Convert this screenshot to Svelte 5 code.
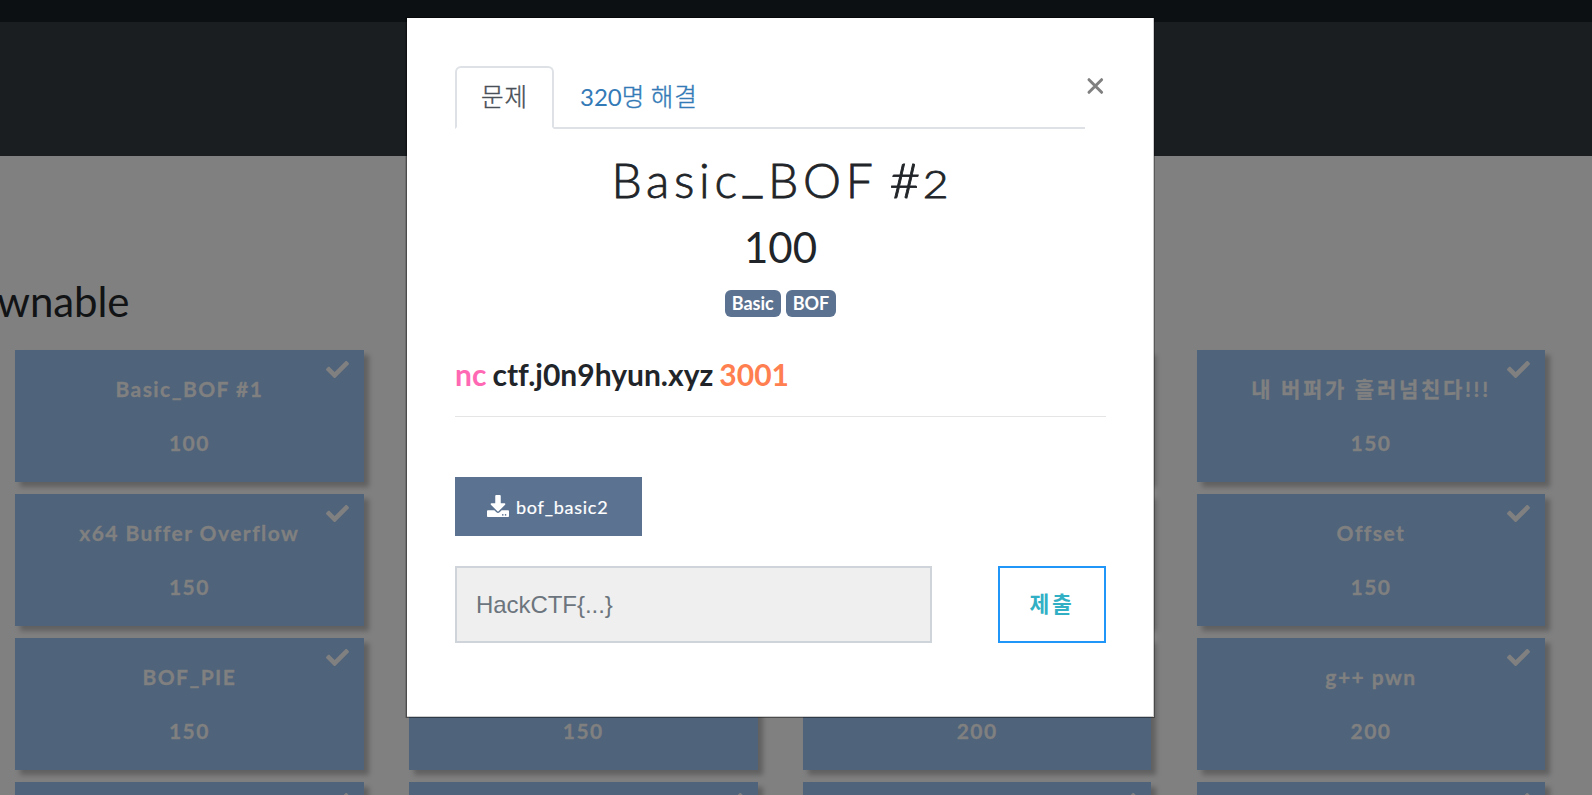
<script>
  const rows = [
    [['Basic_BOF #1', 100], ['', 100], ['', 100], ['내 버퍼가 흘러넘친다!!!', 150]],
    [['x64 Buffer Overflow', 150], ['', 150], ['', 150], ['Offset', 150]],
    [['BOF_PIE', 150], ['', 150], ['', 200], ['g++ pwn', 200]],
    [['', ''], ['', ''], ['', ''], ['', '']]
  ];
</script>

<div class="page">
  <div class="navbar"></div>
  <div class="jumbotron"></div>
  <main>
    <h3 class="category">Pwnable</h3>
    <div class="grid">
      {#each rows as row}
        {#each row as [name, value]}
          <div class="card">
            <svg class="check" viewBox="0 0 512 512" fill="currentColor"><path d="M173.898 439.404l-166.4-166.4c-9.997-9.997-9.997-26.206 0-36.204l36.203-36.204c9.997-9.998 26.207-9.998 36.204 0L192 312.69 432.095 72.596c9.997-9.997 26.207-9.997 36.204 0l36.203 36.204c9.997 9.997 9.997 26.206 0 36.204l-294.4 294.401c-9.998 9.997-26.207 9.997-36.204-.001z" /></svg>
            <p class:ko={name.startsWith('내')}>{name}</p>
            <span>{value}</span>
          </div>
        {/each}
      {/each}
    </div>
  </main>
</div>

<div class="overlay">
  <div class="modal">
    <div class="head">
      <div class="tabs">
        <div class="tab active"><span class="hangul">문제</span></div>
        <div class="tab">320<span class="hangul">명 해결</span></div>
      </div>
      <svg class="close" viewBox="0 0 18 18"><path d="M3 2.700L15.600 15.300M15.600 2.700L3 15.300" /></svg>
    </div>
    <h2>Basic<i>_</i>BOF <em>#</em><b>2</b></h2>
    <h3 class="value">100</h3>
    <div class="tags"><span>Basic</span><span>BOF</span></div>
    <div class="desc"><span class="nc">nc</span> ctf.j0n9hyun.xyz <span class="port">3001</span></div>
    <div class="file">
      <svg viewBox="0 0 512 512" fill="currentColor"><path d="M216 0h80c13.300 0 24 10.700 24 24v168h87.700c17.800 0 26.700 21.500 14.100 34.100L269.700 378.300c-7.500 7.500-19.800 7.500-27.300 0L90.100 226.100c-12.600-12.600-3.700-34.100 14.100-34.100H192V24c0-13.300 10.700-24 24-24zm296 376v112c0 13.300-10.700 24-24 24H24c-13.300 0-24-10.700-24-24V376c0-13.300 10.700-24 24-24h146.700l49 49c20.100 20.100 52.500 20.100 72.600 0l49-49H488c13.300 0 24 10.700 24 24zm-124 88c0-11-9-20-20-20s-20 9-20 20 9 20 20 20 20-9 20-20zm64 0c0-11-9-20-20-20s-20 9-20 20 9 20 20 20 20-9 20-20z" /></svg>
      <span>bof_basic2</span>
    </div>
    <div class="form">
      <input placeholder={'HackCTF{...}'} />
      <button>제출</button>
    </div>
  </div>
</div>

<style>
  :global(body) { margin: 0; overflow: hidden; background: #808080; }
  .page, .overlay, .page *, .overlay * { box-sizing: border-box; }
  .page, .overlay { font-family: Lato, 'Noto Sans CJK KR', sans-serif; font-variant-ligatures: none; }
  .page { height: 795px; overflow: hidden; background: #808080; }
  .navbar { height: 22px; background: #0c1013; }
  .jumbotron { height: 134px; background: #1a1e21; }
  .category { margin: 120px 0 0 -28px; height: 74px; font-size: 42px; line-height: 50px; font-weight: 400; letter-spacing: -0.1px; color: #111315; }
  .grid { display: grid; grid-template-columns: repeat(4, 348.7px); column-gap: 45.2px; row-gap: 12px; padding-left: 15px; }
  .card { position: relative; height: 132px; padding-top: 23px; background: #4f637a; box-shadow: 5px 5px 5px rgba(0, 0, 0, 0.25); color: #808080; text-align: center; font-size: 21px; line-height: 32px; font-weight: 700; letter-spacing: 1.45px; -webkit-text-stroke: 0.35px #808080; }
  .card p { margin: 0 0 22px; height: 32px; }
  .card p.ko { letter-spacing: 2.7px; }
  .card span { display: block; }
  .check { position: absolute; top: 8px; right: 15px; width: 23px; height: 23px; }

  .overlay { position: absolute; inset: 0; display: flex; justify-content: flex-start; align-items: flex-start; padding: 18px 0 0 407px; }
  .modal { width: 747px; height: 699px; padding: 48px 47px 0 48px; background: #fff; border: solid #ccc; border-width: 0 1px 1px 0; box-shadow: 0 0 0 1px rgba(0, 0, 0, 0.3), -1px 0 0 1px rgba(0, 0, 0, 0.15); color: #212529; }
  .head { display: flex; height: 63px; }
  .tabs { display: flex; width: 630px; height: 63px; border-bottom: 2px solid #dee2e6; }
  .tab { height: 63px; padding: 11px 24px 0; border: 2px solid transparent; border-radius: 6px 6px 0 0; font-size: 24px; line-height: 36px; font-weight: 400; color: #337ab7; white-space: nowrap; }
  .tab.active { width: 99px; padding-right: 0; border-color: #dee2e6 #dee2e6 #fff; background: #fff; color: #495057; }
  .hangul { position: relative; top: -0.5px; font-size: 24.5px; font-weight: 300; letter-spacing: 0.9px; word-spacing: -2px; -webkit-text-stroke: 0.4px currentColor; }
  .close { width: 18px; height: 18px; margin: 11px 0 0 1px; fill: none; stroke: #808080; stroke-width: 3; stroke-linecap: round; }
  h2 { margin: 22px 0 0; height: 58px; padding-right: 3px; text-align: center; font-size: 48px; line-height: 58px; font-weight: 300; letter-spacing: 4.7px; word-spacing: -3px; white-space: nowrap; -webkit-text-stroke: 0.8px #212529; }
  h2 i { position: relative; top: -6px; font-style: normal; -webkit-text-stroke: 1.4px #212529; }
  h2 em { display: inline-block; font-style: normal; letter-spacing: 0; margin-right: 6px; transform: scaleX(1.12); }
  h2 b { display: inline-block; font-weight: 300; font-size: 37px; letter-spacing: 0; transform: scaleX(1.2); }
  .value { margin: 13px 0 0; height: 50px; text-align: center; font-size: 42px; line-height: 50px; font-weight: 400; }
  .tags { display: flex; justify-content: center; gap: 5px; margin-top: 18px; }
  .tags span { height: 27px; padding: 0 7px; border-radius: 6px; background: #5b7290; color: #fff; font-size: 18px; line-height: 27px; font-weight: 700; }
  .desc { margin-top: 39px; height: 61px; border-bottom: 1px solid #e5e5e5; font-size: 30px; line-height: 36px; font-weight: 700; word-spacing: -1.2px; white-space: nowrap; }
  .nc { color: #ff69b4; }
  .port { color: #ff7f50; }
  .file { display: flex; align-items: center; width: 187px; height: 59px; margin-top: 60px; padding-left: 32px; gap: 7px; background: #5b7290; color: #fff; font-size: 18px; letter-spacing: 0.75px; -webkit-text-stroke: 0.2px #fff; }
  .file svg { width: 22px; height: 22px; margin-bottom: 2px; stroke: none; }
  .form { display: flex; justify-content: space-between; margin-top: 30px; }
  input { width: 477px; height: 77px; padding: 0 19px; border: 2px solid #ced4da; border-radius: 0; background: #efefef; font: 24px 'Liberation Sans', sans-serif; letter-spacing: -0.05px; }
  input::placeholder { color: #6c757d; opacity: 1; }
  button { width: 108px; height: 77px; padding: 0 0 5px; border: 2px solid #2196f9; background: #fff; color: #31b0c5; font: 700 21.5px Lato, 'Noto Sans CJK KR', sans-serif; letter-spacing: 2.8px; }
</style>
